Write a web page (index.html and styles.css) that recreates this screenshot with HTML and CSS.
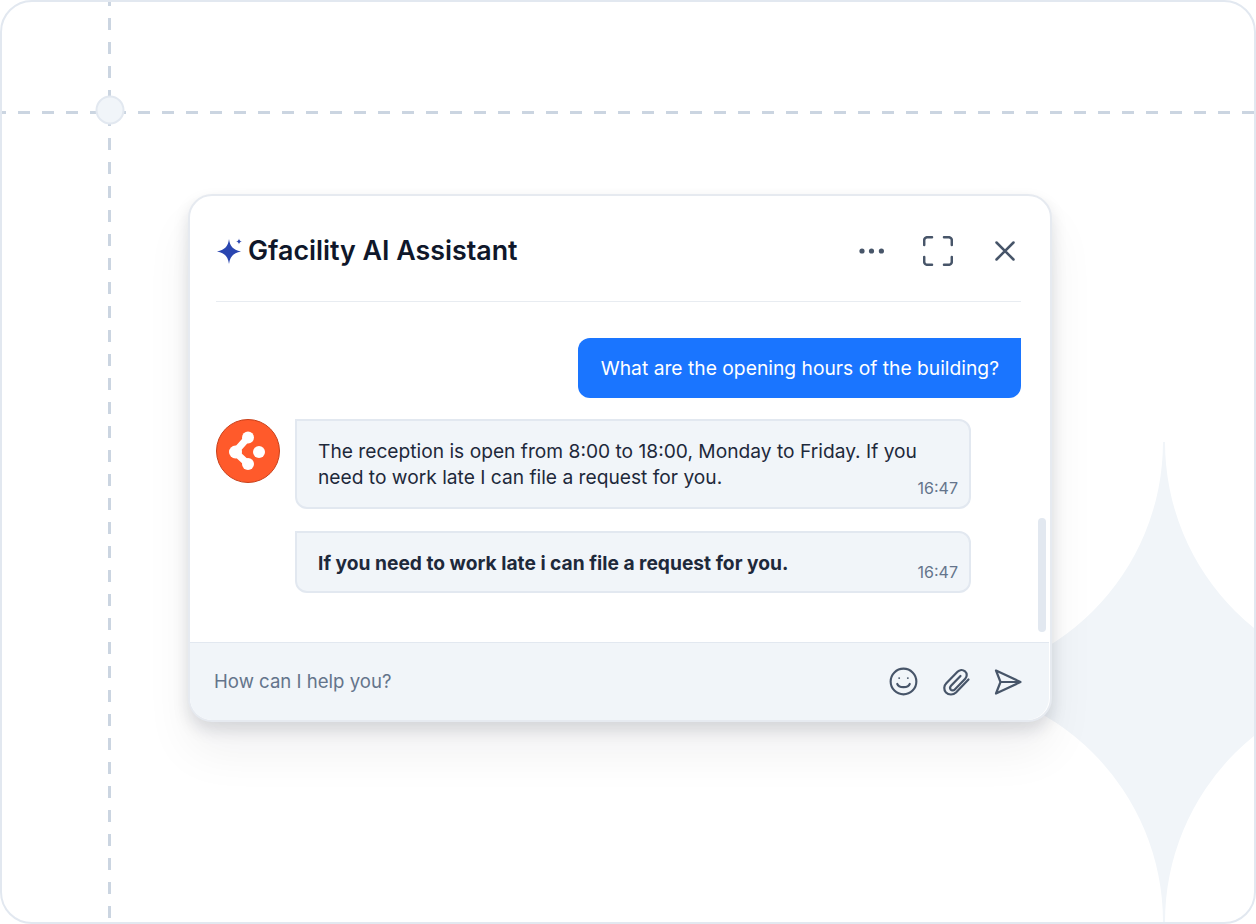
FILE: index.html
```html
<!DOCTYPE html>
<html lang="en">
<head>
  <meta charset="UTF-8" />
  <meta name="viewport" content="width=device-width, initial-scale=1.0"/>
  <title>Gfacility AI Assistant</title>
  <link rel="stylesheet" href="styles.css">
</head>
<body>

  <div class="frame">
    <!-- backdrop: guides and big star -->
    <svg class="backdrop" width="1256" height="924" viewBox="0 0 1256 924" aria-hidden="true">
      <path class="star" d="M1163 442H1165A239 239 0 0 0 1404 681V683A239 239 0 0 0 1165 922H1163A239 239 0 0 0 924 683V681A239 239 0 0 0 1163 442Z"/>
      <line class="guide" x1="2" y1="112.500" x2="1254" y2="112.500"/>
      <line class="guide" x1="109.500" y1="2" x2="109.500" y2="922"/>
      <circle class="node" cx="110" cy="110" r="13.500"/>
    </svg>

    <div class="card">
      <header class="card-head">
        <div class="title">
          <svg width="26" height="28" viewBox="0 0 26 28">
            <path fill="#2a46b0" d="M13 2C14 9 16.500 12.500 25 14.500C16.500 16.500 14 20 13 27C12 20 9.500 16.500 1 14.500C9.500 12.500 12 9 13 2Z"/>
            <path fill="#2a46b0" d="M23 1.500C23.300 3.400 24 4.100 26 4.500C24 4.900 23.300 5.600 23 7.500C22.700 5.600 22 4.900 20 4.500C22 4.100 22.700 3.400 23 1.500Z"/>
          </svg>
          <h1>Gfacility AI Assistant</h1>
        </div>
        <div class="head-actions">
          <svg width="26" height="8" viewBox="0 0 26 8" fill="#475569">
            <circle cx="3" cy="4" r="2.600"/><circle cx="12.500" cy="4" r="2.600"/><circle cx="22.400" cy="4" r="2.600"/>
          </svg>
          <svg class="ic heavy" width="30" height="30" viewBox="0 0 30 30">
            <path d="M1.200 9V4.200a3 3 0 0 1 3-3H9M21 1.200h4.800a3 3 0 0 1 3 3V9M28.800 21v4.800a3 3 0 0 1-3 3H21M9 28.800H4.200a3 3 0 0 1-3-3V21"/>
          </svg>
          <svg class="ic heavy close" width="22" height="22" viewBox="0 0 22 22">
            <path d="M2.500 2.500L19.500 19.500M19.500 2.500L2.500 19.500"/>
          </svg>
        </div>
      </header>

      <div class="messages">
        <div class="bubble-user">What are the opening hours of the building?</div>
        <div class="bot-row">
          <svg class="avatar" width="64" height="64" viewBox="0 0 64 64">
            <circle cx="32" cy="32" r="31.500" fill="#ff5a2b" stroke="#c8401a"/>
            <path d="M32 18.500L19 33L32 45" fill="none" stroke="#fff" stroke-width="7"/>
            <circle cx="32" cy="18.500" r="6" fill="#fff"/>
            <circle cx="19.500" cy="33" r="6.500" fill="#fff"/>
            <circle cx="32" cy="45" r="6" fill="#fff"/>
            <circle cx="43" cy="33" r="6" fill="#fff"/>
          </svg>
          <div class="bot-list">
            <div class="bubble-bot">
              <p>The reception is open from 8:00 to 18:00, Monday to Friday. If you need to work late I can file a request for you.</p>
              <span class="time">16:47</span>
            </div>
            <div class="bubble-bot short">
              <p><strong>If you need to work late i can file a request for you.</strong></p>
              <span class="time">16:47</span>
            </div>
          </div>
        </div>
        <div class="scrollbar"></div>
      </div>

      <footer class="composer">
        <span class="placeholder">How can I help you?</span>
        <div class="composer-actions">
          <svg class="ic smile" width="29" height="29" viewBox="0 0 30 30">
            <circle cx="15" cy="15" r="13.300"/>
            <path d="M8.500 17.500C10 22 20 22 21.500 17.500"/>
            <circle class="dot" cx="10.500" cy="11.500" r="1"/>
            <circle class="dot" cx="19.500" cy="11.500" r="1"/>
          </svg>
          <svg class="ic" width="28" height="28" viewBox="0 0 28 28">
            <path d="M25.500 11.500L13 24.500C10 27.300 5.500 27 3 24.500C.5 21.800 .8 17.800 3.300 15.300L14.500 3.800C16.500 1.700 19.700 1.300 22 3.300C24.300 5.400 24.200 8.700 22.200 10.800L11.800 21.500C10.600 22.700 8.800 22.700 7.800 21.700C6.800 20.600 6.900 19 8 17.800L17.500 8"/>
          </svg>
          <svg class="ic" width="28" height="26" viewBox="0 0 28 26">
            <path d="M2 1.500L26.500 13L2 24.500L6.500 13ZM6.500 13H26.500"/>
          </svg>
        </div>
      </footer>
    </div>
  </div>

</body>
</html>
```

FILE: styles.css
```css
* {
  box-sizing: border-box;
}

body {
  margin: 0;
  font-family: 'Inter', sans-serif;
  background-color: #fff;
}

.frame {
  position: relative;
  width: 1256px;
  height: 924px;
  border: 2px solid #e2e8f0;
  border-radius: 32px;
  padding: 192px 0 0 186px;
  overflow: hidden;
}

.backdrop {
  position: absolute;
  top: -2px;
  left: -2px;
}

.star {
  fill: #f1f5f9;
}

.guide {
  stroke: #cbd5e1;
  stroke-width: 3;
  stroke-dasharray: 12 12;
  stroke-dashoffset: 8;
}

.node {
  fill: #f1f5f9;
  stroke: #e2e8f0;
  stroke-width: 2;
}

.card {
  position: relative;
  display: flex;
  flex-direction: column;
  width: 864px;
  height: 528px;
  background: #fff;
  border: 2px solid #e6eaf0;
  border-radius: 24px;
  box-shadow: 0 8px 16px rgba(15, 23, 42, 0.13), 0 30px 48px rgba(15, 23, 42, 0.06);
}

.card-head {
  display: flex;
  align-items: center;
  justify-content: space-between;
  height: 106px;
  margin: 0 29px 0 26px;
  padding-top: 4px;
  border-bottom: 1px solid #e8ecf1;
}

.title {
  display: flex;
  align-items: center;
  gap: 6px;
}

h1 {
  margin: 0 0 2px;
  font-size: 26.800px;
  font-weight: 600;
  line-height: 32px;
  color: #0f172a;
}

.head-actions {
  display: flex;
  align-items: center;
  gap: 38px;
  margin-right: 5px;
}

.close {
  margin-left: 3px;
}

.ic {
  fill: none;
  stroke: #475569;
  stroke-width: 2.200;
  stroke-linecap: round;
  stroke-linejoin: round;
}

.ic.heavy {
  stroke-width: 2.500;
}

.ic .dot {
  fill: #475569;
  stroke: none;
}

.smile {
  margin-right: 2px;
}

.messages {
  position: relative;
  flex: 1;
  display: flex;
  flex-direction: column;
  padding: 36px 29px 0 26px;
}

.bubble-user {
  align-self: flex-end;
  padding: 0 22px 0 23px;
  height: 60px;
  line-height: 60px;
  font-size: 19.250px;
  color: #fff;
  background: #1a75ff;
  border-radius: 12px 0 12px 12px;
}

.bot-row {
  display: flex;
  gap: 15px;
  margin-top: 21px;
}

.avatar {
  flex-shrink: 0;
}

.bot-list {
  display: flex;
  flex-direction: column;
  gap: 22px;
  width: 676px;
}

.bubble-bot {
  position: relative;
  padding: 17px 21px 17px;
  font-size: 19.200px;
  line-height: 26px;
  color: #1e293b;
  background: #f1f5f9;
  border: 2px solid #e2e8f0;
  border-radius: 0 12px 12px 12px;
}

.bubble-bot.short {
  padding-bottom: 15px;
}

.bubble-bot p {
  margin: 0;
}

.time {
  position: absolute;
  right: 11px;
  bottom: 10px;
  font-size: 16px;
  line-height: 18px;
  color: #64748b;
}

.scrollbar {
  position: absolute;
  top: 216px;
  right: 4px;
  width: 8px;
  height: 114px;
  background: #e2e8f0;
  border-radius: 4px;
}

.composer {
  display: flex;
  align-items: center;
  justify-content: space-between;
  flex-shrink: 0;
  height: 78px;
  margin-right: 1px;
  padding: 0 27px 0 24px;
  background: #f1f5f9;
  border-top: 1px solid #e2e8f0;
  border-radius: 0 0 22px 22px;
}

.placeholder {
  margin-bottom: 2px;
  font-size: 18.600px;
  color: #64748b;
}

.composer-actions {
  display: flex;
  align-items: center;
  gap: 23px;
}
```
